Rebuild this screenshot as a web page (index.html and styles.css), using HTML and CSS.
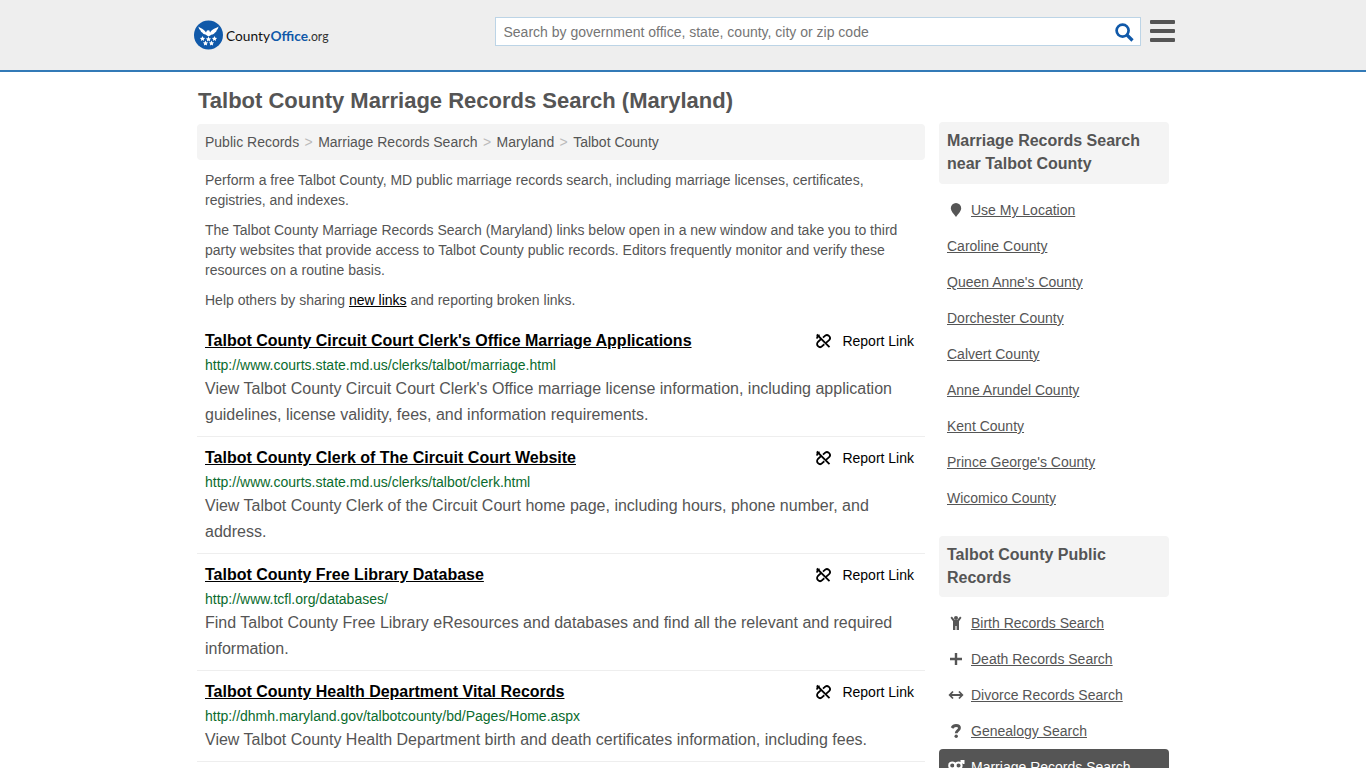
FILE: index.html
```html
<!DOCTYPE html>
<html lang="en">
<head>
    <meta charset="UTF-8">
    <meta name="viewport" content="width=device-width, initial-scale=1.0">
    <title>Talbot County Marriage Records Search (Maryland)</title>
    <link rel="stylesheet" href="styles.css">
</head>
<body>
    <svg class="sprite" width="0" height="0">
        <symbol id="unlink" viewBox="0 0 16 16">
            <g fill="none" stroke="currentColor" stroke-width="1.800">
                <path d="M1.800 1.500L14.500 14.200"/>
                <path d="M8 4.600l1.600-1.500a3 3 0 0 1 4.500 4.100L11 9.900"/>
                <path d="M6 6.200L2.900 9a2.900 2.900 0 0 0 4.300 4.100L9.300 11.300"/>
                <path d="M2.200 5.600c-.4-1.700.8-3.100 2.500-3.100"/>
            </g>
        </symbol>
    </svg>

    <header class="header">
        <div class="container header-inner">
            <a class="logo" href="#">
                <svg width="142" height="30" viewBox="0 0 142 30">
                    <circle cx="14.500" cy="15" r="14.500" fill="#1059a9"/>
                    <g fill="#fff">
                        <path d="M4.500 6.500C6.500 8.500 9.800 8.600 12 12.500l1-2 2.200-.3.900 2.300c2-3.900 5.900-4 8.400-6-.3 1.800-.8 2.800-1.700 3.500-.3 1.500-1 2.200-2 2.700-.7 1.300-1.700 1.700-3 1.800L14.500 16.500 11.500 14.500c-1.500-.1-2.400-.5-3-1.700-1.200-.4-1.800-1.200-2.200-2.700-1-.8-1.600-1.800-1.800-3.600z"/>
                        <path id="star" d="M8.500 16l.8 1.700 1.800.2-1.300 1.300.3 1.800-1.600-.9-1.600.9.300-1.800-1.300-1.300 1.800-.2z"/>
                        <use href="#star" x="6" y=".5"/>
                        <use href="#star" x="12"/>
                        <use href="#star" x="3" y="4.600"/>
                        <use href="#star" x="9" y="4.600"/>
                    </g>
                    <text class="logo-text" x="32" y="20.500" textLength="44" lengthAdjust="spacingAndGlyphs">County</text>
                    <text class="logo-text logo-bold" x="76.500" y="20.500" textLength="37.500" lengthAdjust="spacingAndGlyphs">Office</text>
                    <text class="logo-text logo-org" x="114" y="20.500" textLength="20.500" lengthAdjust="spacingAndGlyphs">.org</text>
                </svg>
            </a>
            <form class="search">
                <input type="text" placeholder="Search by government office, state, county, city or zip code">
                <svg class="search-icon" width="19" height="19" viewBox="0 0 19 19" fill="none" stroke="#1059a9">
                    <circle cx="7.600" cy="7.600" r="6" stroke-width="2.700"/>
                    <path d="M12 12l5.500 5.500" stroke-width="3.200"/>
                </svg>
            </form>
            <div class="menu-button"><span></span><span></span><span></span></div>
        </div>
    </header>

    <div class="container content">
        <main class="main">
            <h1>Talbot County Marriage Records Search (Maryland)</h1>
            <nav class="breadcrumb">
                <a href="#">Public Records</a><i>&gt;</i><a href="#">Marriage Records Search</a><i>&gt;</i><a href="#">Maryland</a><i>&gt;</i><a href="#">Talbot County</a>
            </nav>
            <div class="intro">
                <p>Perform a free Talbot County, MD public marriage records search, including marriage licenses, certificates, registries, and indexes.</p>
                <p>The Talbot County Marriage Records Search (Maryland) links below open in a new window and take you to third party websites that provide access to Talbot County public records. Editors frequently monitor and verify these resources on a routine basis.</p>
                <p>Help others by sharing <a href="#">new links</a> and reporting broken links.</p>
            </div>

            <div class="result">
                <div class="result-head">
                    <h2><a href="#">Talbot County Circuit Court Clerk's Office Marriage Applications</a></h2>
                    <a class="report" href="#"><svg width="16" height="16"><use href="#unlink"/></svg>Report Link</a>
                </div>
                <div class="url">http://www.courts.state.md.us/clerks/talbot/marriage.html</div>
                <p>View Talbot County Circuit Court Clerk's Office marriage license information, including application guidelines, license validity, fees, and information requirements.</p>
            </div>
            <div class="result">
                <div class="result-head">
                    <h2><a href="#">Talbot County Clerk of The Circuit Court Website</a></h2>
                    <a class="report" href="#"><svg width="16" height="16"><use href="#unlink"/></svg>Report Link</a>
                </div>
                <div class="url">http://www.courts.state.md.us/clerks/talbot/clerk.html</div>
                <p>View Talbot County Clerk of the Circuit Court home page, including hours, phone number, and address.</p>
            </div>
            <div class="result">
                <div class="result-head">
                    <h2><a href="#">Talbot County Free Library Database</a></h2>
                    <a class="report" href="#"><svg width="16" height="16"><use href="#unlink"/></svg>Report Link</a>
                </div>
                <div class="url">http://www.tcfl.org/databases/</div>
                <p>Find Talbot County Free Library eResources and databases and find all the relevant and required information.</p>
            </div>
            <div class="result">
                <div class="result-head">
                    <h2><a href="#">Talbot County Health Department Vital Records</a></h2>
                    <a class="report" href="#"><svg width="16" height="16"><use href="#unlink"/></svg>Report Link</a>
                </div>
                <div class="url">http://dhmh.maryland.gov/talbotcounty/bd/Pages/Home.aspx</div>
                <p>View Talbot County Health Department birth and death certificates information, including fees.</p>
            </div>
        </main>

        <aside class="sidebar">
            <h3>Marriage Records Search near Talbot County</h3>
            <ul>
                <li>
                    <svg width="18" height="14" viewBox="0 0 18 14"><path fill="currentColor" d="M9 0a5.200 5.200 0 0 1 5.200 5.200C14.200 8 11.500 10.500 9 14 6.500 10.500 3.800 8 3.800 5.200A5.200 5.200 0 0 1 9 0z"/></svg>
                    <a href="#">Use My Location</a>
                </li>
                <li><a href="#">Caroline County</a></li>
                <li><a href="#">Queen Anne's County</a></li>
                <li><a href="#">Dorchester County</a></li>
                <li><a href="#">Calvert County</a></li>
                <li><a href="#">Anne Arundel County</a></li>
                <li><a href="#">Kent County</a></li>
                <li><a href="#">Prince George's County</a></li>
                <li><a href="#">Wicomico County</a></li>
            </ul>
            <h3 class="records-title">Talbot County Public Records</h3>
            <ul>
                <li>
                    <svg width="18" height="14" viewBox="0 0 18 14"><g fill="currentColor"><circle cx="9" cy="2" r="2"/><path d="M3.500 1.700L4.900.4 7.800 4h2.400L13.100.4l1.400 1.300L12 5.200V14H9.600v-4H8.400v4H6V5.200z"/></g></svg>
                    <a href="#">Birth Records Search</a>
                </li>
                <li>
                    <svg width="18" height="14" viewBox="0 0 18 14"><path fill="none" stroke="currentColor" stroke-width="2.400" d="M3 7h12M9 1v12"/></svg>
                    <a href="#">Death Records Search</a>
                </li>
                <li>
                    <svg width="18" height="14" viewBox="0 0 18 14"><path fill="none" stroke="currentColor" stroke-width="1.800" d="M3 7h12M6 3.500L2.700 7 6 10.500M12 3.500L15.300 7 12 10.500"/></svg>
                    <a href="#">Divorce Records Search</a>
                </li>
                <li>
                    <svg width="18" height="14" viewBox="0 0 18 14"><path fill="none" stroke="currentColor" stroke-width="2.800" d="M5 4C6 2.200 7.300 1.500 9 1.500c2 0 3.500 1 3.500 2.600C12.500 6.500 9.200 6.300 9.200 9.300"/><circle fill="currentColor" cx="9.200" cy="12.300" r="1.700"/></svg>
                    <a href="#">Genealogy Search</a>
                </li>
                <li class="active">
                    <svg width="18" height="14" viewBox="0 0 18 14"><g fill="none" stroke="currentColor" stroke-width="2"><circle cx="5.300" cy="5.500" r="3.100"/><circle cx="11.500" cy="5.500" r="3.100"/><path d="M5.300 8.500V14M3 11.500h4.600M13.500 3.500L16 1M13.500 1h3v3"/></g></svg>
                    <a href="#">Marriage Records Search</a>
                </li>
            </ul>
        </aside>
    </div>
</body>
</html>
```
FILE: styles.css
```css
* {
    box-sizing: border-box;
}

body {
    font-family: "Liberation Sans", Arial, sans-serif;
    font-size: 14px;
    line-height: 20px;
    color: #555;
    background: #fff;
    margin: 0;
    height: 768px;
    overflow: hidden;
}

h1, h2, h3, p, ul {
    margin: 0;
    padding: 0;
}

a {
    color: inherit;
}

.sprite {
    display: block;
}

.container {
    width: 972px;
    margin: 0 auto;
}

.header {
    background: #eee;
    height: 72px;
    border-bottom: 2px solid #337ab7;
}

.header-inner {
    display: flex;
    align-items: flex-start;
    padding: 17px 0 0;
}

.logo {
    width: 142px;
    height: 30px;
    margin: 3px 159px 0 -3px;
}

.logo svg {
    display: block;
}

.logo-text {
    font-family: Lato, sans-serif;
    font-size: 14px;
    fill: #111;
}

.logo-bold {
    font-weight: bold;
    fill: #1059a9;
}

.logo-org {
    fill: #333;
}

.search {
    display: flex;
    align-items: center;
    flex-shrink: 0;
    width: 646px;
    height: 29px;
    padding-right: 6px;
    background: #fff;
    border: 1px solid #bcd4e6;
}

.search input {
    flex: 1;
    height: 27px;
    padding: 0 0 0 7.5px;
    border: 0;
    background: none;
    font: 14px "Liberation Sans", Arial, sans-serif;
}

.search input::placeholder {
    color: #757575;
}

.search-icon {
    margin-top: 1px;
}

.menu-button {
    display: flex;
    flex-direction: column;
    flex-shrink: 0;
    gap: 5px;
    width: 25px;
    margin: 3px 0 0 9px;
}

.menu-button span {
    height: 4px;
    border-radius: 1px;
    background: #555;
}

.content {
    display: flex;
    align-items: flex-start;
    gap: 14px;
}

.main {
    width: 728px;
}

h1 {
    font-size: 22px;
    line-height: 30px;
    padding: 14px 1px 8px;
}

.breadcrumb {
    height: 36px;
    padding: 8px;
    background: #f4f4f4;
    border-radius: 4px;
}

.breadcrumb a {
    text-decoration: none;
}

.breadcrumb i {
    font-style: normal;
    color: #bbb;
    padding: 0 5.4px;
}

.intro {
    padding: 10px 8px 0;
}

.intro p {
    margin-bottom: 10px;
}

.intro a {
    color: #000;
}

.result {
    padding: 7px 8px 8px;
    border-bottom: 1px solid #eee;
}

.result-head {
    display: flex;
    justify-content: space-between;
    height: 27px;
    padding-right: 3px;
    line-height: 27px;
    color: #000;
}

.result h2 {
    font-size: 16px;
}

.report {
    display: flex;
    align-items: center;
    gap: 11px;
    padding-top: 2px;
    line-height: 25px;
    text-decoration: none;
}

.report svg {
    margin-bottom: 1px;
}

.url {
    color: #0a6b2d;
    line-height: 22px;
}

.result p {
    font-size: 16px;
    line-height: 26px;
}

.sidebar {
    width: 230px;
    padding-top: 50px;
}

h3 {
    font-size: 16px;
    line-height: 23px;
    padding: 7px 8px 9px;
    background: #f4f4f4;
    border-radius: 4px;
}

.records-title {
    padding-bottom: 8px;
}

ul {
    list-style: none;
    padding: 8px 0 20px;
}

li {
    display: flex;
    align-items: center;
    gap: 6px;
    height: 36px;
    padding: 0 8px;
}

.active {
    background: #555;
    border-radius: 4px;
    color: #fff;
}
```
